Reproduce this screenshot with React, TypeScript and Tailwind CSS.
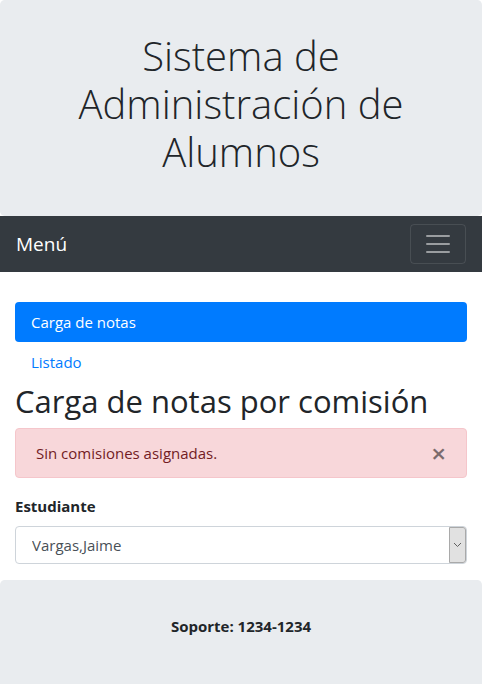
import React from "react";

const App = () => {
  return (
    <div className="min-h-screen bg-white text-[#212529] font-['Open_Sans',sans-serif] text-[15px] leading-6">
      <div className="bg-[#e9ecef] rounded-[4.8px] px-4 py-8 text-center">
        <h1 className="text-[40px] leading-[1.2] font-light mb-2">
          Sistema de Administración de Alumnos
        </h1>
      </div>

      <nav className="bg-[#343a40] h-14 px-4 flex items-center justify-between">
        <span className="text-white text-[19px] leading-[30px]">Menú</span>
        <button className="w-14 h-10 border border-white/10 rounded-[4px] flex items-center justify-center">
          <svg width="30" height="30" viewBox="0 0 30 30">
            <path
              d="M4 7h22M4 15h22M4 23h22"
              stroke="rgba(255,255,255,0.5)"
              strokeWidth="2"
              strokeLinecap="round"
            />
          </svg>
        </button>
      </nav>

      <div className="px-[15px] pt-[30px]">
        <ul className="flex flex-col">
          <li className="bg-[#007bff] text-white rounded-[4px] px-4 py-2">Carga de notas</li>
          <li className="text-[#007bff] px-4 py-2">Listado</li>
        </ul>

        <h2 className="text-[31px] leading-[38.4px] mb-2">Carga de notas por comisión</h2>

        <div className="relative border border-[#f5c6cb] bg-[#f8d7da] text-[#721c24] rounded-[4px] py-3 pl-5 pr-16 mb-4">
          Sin comisiones asignadas.
          <button className="absolute right-0 top-0 px-5 py-3 text-[26px] font-semibold leading-6 text-black opacity-50">
            ×
          </button>
        </div>

        <div className="mb-4">
          <label className="block font-bold mb-2">Estudiante</label>
          <div className="relative">
            <select className="appearance-none w-full h-[38px] border border-[#ced4da] rounded-[4px] pl-4 pr-6 bg-white text-[#495057]">
              <option>Vargas,Jaime</option>
            </select>
            <span className="absolute right-[1px] top-[1px] bottom-[1px] w-[17px] bg-[#e1e1e1] border border-[#a9a9a9] rounded-r-[3px] flex items-center justify-center pointer-events-none">
              <svg width="9" height="6" viewBox="0 0 9 6">
                <path d="M1 1l3.5 3.5L8 1" stroke="#606060" strokeWidth="1" fill="none" />
              </svg>
            </span>
          </div>
        </div>
      </div>

      <div className="bg-[#e9ecef] rounded-[4.8px] px-4 py-8 text-center">
        <p className="font-bold mb-4 text-[15px] leading-7">Soporte: 1234-1234</p>
      </div>
    </div>
  );
};

export default App;
